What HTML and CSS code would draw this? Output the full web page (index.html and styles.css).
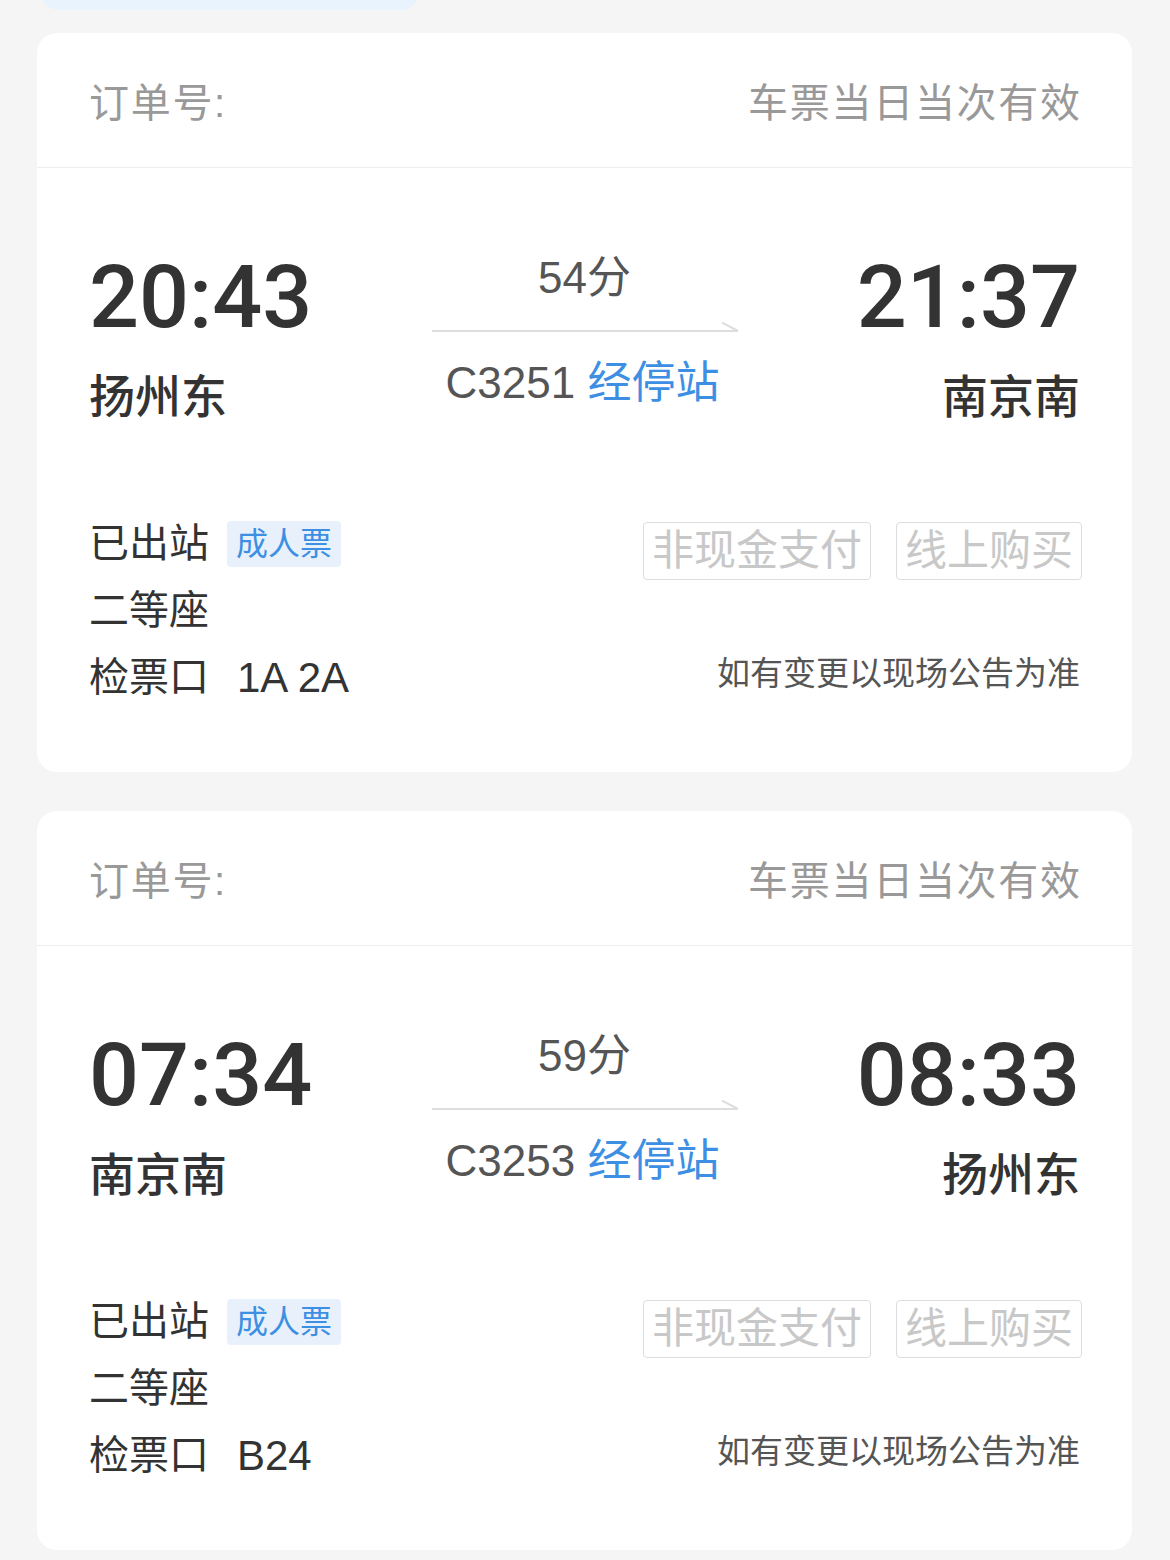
FILE: index.html
```html
<!DOCTYPE html>
<html lang="zh-CN">
<head>
  <meta charset="UTF-8">
  <meta name="viewport" content="width=device-width, initial-scale=1.0">
  <title>车票</title>
  <link rel="stylesheet" href="styles.css">
</head>
<body>
  <div class="top-tab"></div>

  <div class="ticket">
    <div class="ticket-head">
      <span class="order">订单号:</span>
      <span class="valid">车票当日当次有效</span>
    </div>
    <div class="trip">
      <div class="end">
        <div class="time">20:43</div>
        <div class="station">扬州东</div>
      </div>
      <div class="middle">
        <div class="duration">54分</div>
        <div class="arrow"></div>
        <div class="train">C3251 <span class="stops">经停站</span></div>
      </div>
      <div class="end right">
        <div class="time">21:37</div>
        <div class="station">南京南</div>
      </div>
    </div>
    <div class="detail">
      <div class="info">
        <div class="row">已出站 <span class="tag">成人票</span></div>
        <div class="row">二等座</div>
        <div class="row">检票口 <span class="gate">1A 2A</span></div>
      </div>
      <div class="side">
        <div class="btns">
          <span class="btn">非现金支付</span>
          <span class="btn">线上购买</span>
        </div>
        <div class="note">如有变更以现场公告为准</div>
      </div>
    </div>
  </div>

  <div class="ticket">
    <div class="ticket-head">
      <span class="order">订单号:</span>
      <span class="valid">车票当日当次有效</span>
    </div>
    <div class="trip">
      <div class="end">
        <div class="time">07:34</div>
        <div class="station">南京南</div>
      </div>
      <div class="middle">
        <div class="duration">59分</div>
        <div class="arrow"></div>
        <div class="train">C3253 <span class="stops">经停站</span></div>
      </div>
      <div class="end right">
        <div class="time">08:33</div>
        <div class="station">扬州东</div>
      </div>
    </div>
    <div class="detail">
      <div class="info">
        <div class="row">已出站 <span class="tag">成人票</span></div>
        <div class="row">二等座</div>
        <div class="row">检票口 <span class="gate">B24</span></div>
      </div>
      <div class="side">
        <div class="btns">
          <span class="btn">非现金支付</span>
          <span class="btn">线上购买</span>
        </div>
        <div class="note">如有变更以现场公告为准</div>
      </div>
    </div>
  </div>
</body>
</html>
```

FILE: styles.css
```css
body {
  margin: 0;
  background-color: #f5f5f5;
  font-family: "Liberation Sans", "Noto Sans CJK SC", sans-serif;
  color: #333;
}

.top-tab {
  height: 10px;
  width: 380px;
  margin-left: 40px;
  margin-top: -20px;
  padding-top: 20px;
  background-color: #e9f3fd;
  border-radius: 0 0 20px 20px;
  margin-bottom: 23px;
}

.ticket {
  margin: 0 38px 39px 37px;
  background-color: #fff;
  border-radius: 20px;
}

.ticket-head {
  display: flex;
  justify-content: space-between;
  align-items: center;
  height: 134px;
  padding: 0 52px;
  border-bottom: 1px solid #eee;
  font-size: 40px;
  letter-spacing: 1.7px;
  color: #999;
}

.ticket-head .valid {
  margin-right: -1.7px;
}

.trip {
  display: grid;
  grid-template-columns: 1fr 306px 1fr;
  padding: 85px 52px 0;
}

.end .time {
  font-family: Roboto, "Liberation Sans", sans-serif;
  font-size: 88px;
  line-height: 88px;
  font-weight: 500;
  color: #333;
}

.end .station {
  margin-top: 29px;
  font-family: "Noto Sans CJK SC", sans-serif;
  font-size: 46px;
  line-height: 46px;
  font-weight: 500;
  color: #333;
}

.end.right {
  text-align: right;
}

.middle {
  text-align: center;
}

.duration {
  font-size: 44px;
  line-height: 50px;
  color: #555;
}

.arrow {
  position: relative;
  height: 2px;
  margin-top: 27px;
  background-color: #ddd;
}

.arrow::after {
  content: "";
  position: absolute;
  right: 0;
  top: 0;
  width: 18px;
  height: 2px;
  background-color: #ddd;
  transform: rotate(28deg);
  transform-origin: right center;
}

.train {
  margin-top: 26px;
  margin-left: -4px;
  font-size: 44px;
  line-height: 50px;
  color: #555;
}

.stops {
  color: #3d8fe3;
}

.detail {
  display: flex;
  justify-content: space-between;
  padding: 94px 52px 61px;
}

.info .row {
  font-size: 40px;
  line-height: 67px;
  height: 67px;
  color: #333;
  display: flex;
  align-items: center;
}

.tag {
  margin-left: 18px;
  padding: 0 9px;
  height: 46px;
  line-height: 46px;
  font-size: 32px;
  color: #3d8fe3;
  background-color: #e8f1fb;
  border-radius: 4px;
}

.gate {
  margin-left: 28px;
  font-size: 42px;
}

.side {
  display: flex;
  flex-direction: column;
  align-items: flex-end;
  margin-right: -2px;
}

.btns {
  display: flex;
  gap: 25px;
  margin-top: 12px;
}

.btn {
  height: 56px;
  line-height: 56px;
  padding: 0 8px;
  font-size: 42px;
  color: #c8c8c8;
  border: 1px solid #ddd;
  border-radius: 4px;
}

.note {
  margin-top: 74px;
  margin-right: 2px;
  font-size: 33px;
  line-height: 40px;
  color: #555;
}
```
